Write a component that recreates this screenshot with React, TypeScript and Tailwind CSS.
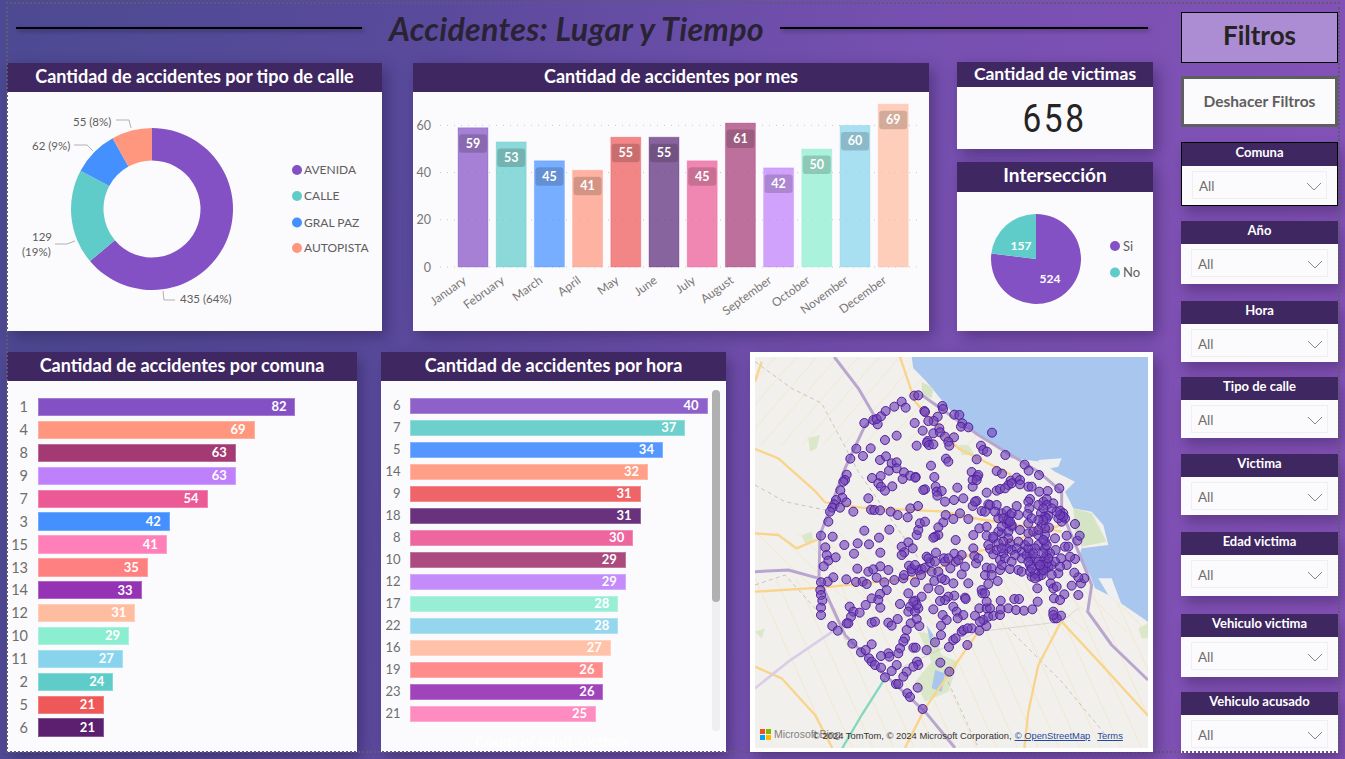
import React from "react";

const FONT = "[font-family:Lato,'Open_Sans',sans-serif]";

const PTS: number[] = [358,234,385,225,398,238,395,222,408,214,422,198,448,185,470,170,482,188,508,152,520,151,538,198,540,201,592,183,594,192,628,209,643,210,652,235,648,245,670,247,741,263,578,215,566,228,550,228,509,234,455,272,420,285,533,257,565,265,583,250,585,262,600,275,627,277,548,288,546,293,552,300,565,298,515,302,610,290,613,302,708,302,715,315,726,320,781,330,695,343,603,341,610,350,558,362,377,310,334,311,354,333,316,341,405,345,423,334,440,355,455,352,432,377,455,370,477,382,473,402,495,392,512,396,511,398,381,399,407,393,400,415,408,425,420,437,442,424,305,389,300,405,295,410,286,436,292,458,273,465,268,478,262,488,285,488,304,472,255,500,250,530,325,500,370,460,378,494,388,495,405,496,437,500,458,510,488,517,496,490,519,483,568,396,540,433,535,435,572,425,575,440,590,438,577,452,600,470,627,465,655,460,637,428,683,425,680,381,683,405,697,395,700,390,695,405,725,443,755,378,771,386,839,359,851,377,882,390,797,407,815,398,825,405,790,420,825,418,850,425,860,425,883,440,908,438,943,430,755,437,765,432,695,468,683,483,710,498,730,478,735,480,755,480,770,505,785,498,795,510,820,510,815,483,855,462,850,470,853,490,848,507,888,505,895,470,905,462,925,475,945,497,955,505,960,520,950,530,990,537,910,512,900,515,890,540,912,548,850,535,800,545,
228,572,263,575,241,607,298,600,338,595,372,598,402,578,433,554,358,557,245,630,250,647,272,637,236,664,327,626,406,623,337,671,370,680,385,673,406,664,430,675,265,697,248,710,228,712,226,735,228,750,232,767,228,788,228,810,262,843,278,857,322,896,304,703,333,711,353,710,365,717,395,698,418,712,448,705,425,735,405,747,380,760,400,765,362,780,314,785,325,800,344,803,318,815,305,835,310,835,380,833,390,830,406,788,430,833,440,842,458,822,465,777,490,745,475,700,477,690,492,662,500,680,510,712,520,675,530,672,540,668,555,652,545,635,550,640,573,623,597,640,600,650,628,626,650,630,632,650,616,670,650,688,660,665,670,715,685,610,688,632,693,655,725,668,735,612,745,628,470,605,490,592,478,622,503,610,470,630,515,570,520,555,525,535,540,530,580,570,570,575,565,578,595,532,580,547,602,510,625,522,645,505,670,522,703,550,725,545,632,585,685,570,725,572,745,580,
568,708,600,705,625,715,583,735,550,730,530,755,628,752,610,755,600,765,585,768,510,767,495,785,520,790,490,800,510,800,565,793,625,785,635,800,655,810,638,820,593,810,605,825,588,842,515,822,523,843,497,835,485,855,480,880,475,890,465,910,460,925,430,925,433,935,408,933,380,898,348,922,362,915,372,940,380,950,390,960,408,968,455,960,440,978,420,997,485,980,475,995,505,908,512,908,545,915,570,892,588,870,612,906,625,885,632,880,650,860,655,855,680,850,668,850,703,857,724,843,667,900,586,953,613,980,516,950,520,960,505,965,453,1017,460,1017,518,1028,487,1045,495,1056,533,1092,
660,758,662,762,690,812,715,825,705,830,730,815,745,812,765,810,703,790,725,790,735,790,767,793,790,790,767,767,725,770,808,762,822,762,813,795,837,797,862,793,878,770,710,735,712,745,720,745,730,717,758,708,
925,800,928,820,948,812,935,820,925,810,958,748,927,760,945,765,917,715,925,730,935,725,877,730,980,722,1000,750,1008,715,1018,700,1000,697,988,683,940,685,990,642,965,660,975,635,997,587,1004,572,965,572,930,580,960,605,970,605,932,615,948,640,
740,670,765,675,795,672,820,675,830,680,860,695,880,695,890,680,900,670,910,665,895,660,900,640,905,630,900,610,900,590,900,570,900,550,880,600,870,610,855,625,855,640,855,660,855,680,830,620,840,600,820,590,795,595,785,610,775,625,765,645,800,615,815,610,830,640,845,630,870,640,760,595,770,565,790,560,800,540,785,535,760,560,745,575,850,565,865,560,880,570,920,660,930,650,945,665,915,625,920,690,890,690,870,685,
780,640,810,630,880,650,885,665,905,655,895,675,885,660,910,640,895,625,790,580,775,590,850,610,865,625,905,600,895,585,940,520,955,515,945,510,760,520,775,520,790,525,795,530,905,520,895,525,730,600,755,615,720,690,740,690,770,660,800,650,860,670,870,700,850,650,
500,672,510,660,528,690,560,680,580,680,590,700,515,780,505,770,570,650,610,640,640,645,700,640,770,610,800,505,880,525,935,500,690,470,780,430,800,415,880,480,905,480,920,490,895,490,720,500,750,500,850,590,880,555,860,520,825,555,770,545];

const pts: [number, number][] = [];
for (let i = 0; i < PTS.length; i += 2) pts.push([PTS[i], PTS[i + 1]]);

function polar(cx: number, cy: number, r: number, deg: number) {
  const a = ((deg - 90) * Math.PI) / 180;
  return [cx + r * Math.cos(a), cy + r * Math.sin(a)];
}
function ring(cx: number, cy: number, R: number, r: number, a0: number, a1: number) {
  const [x0, y0] = polar(cx, cy, R, a0);
  const [x1, y1] = polar(cx, cy, R, a1);
  const large = a1 - a0 > 180 ? 1 : 0;
  if (r === 0) return `M${cx} ${cy}L${x0} ${y0}A${R} ${R} 0 ${large} 1 ${x1} ${y1}Z`;
  const [x2, y2] = polar(cx, cy, r, a1);
  const [x3, y3] = polar(cx, cy, r, a0);
  return `M${x0} ${y0}A${R} ${R} 0 ${large} 1 ${x1} ${y1}L${x2} ${y2}A${r} ${r} 0 ${large} 0 ${x3} ${y3}Z`;
}

function Panel({ title, cls, headCls, children }: { title: string; cls: string; headCls: string; children: React.ReactNode }) {
  return (
    <section className={`${cls} flex flex-col bg-[#fbfafd] shadow-[5px_6px_14px_rgba(30,15,60,0.38)]`}>
      <h2 className={`${headCls} shrink-0 flex items-center justify-center bg-[#3f2762] text-white font-bold`}>{title}</h2>
      <div className="relative flex-1 min-h-0">{children}</div>
    </section>
  );
}

const DONUT = [
  { v: 435, c: "#8351c4" },
  { v: 129, c: "#5fccc9" },
  { v: 62, c: "#4490ff" },
  { v: 55, c: "#ff977e" },
];

function Donut() {
  let acc = 0;
  const t = "#605e5c";
  return (
    <svg viewBox="0 0 375 239" className="block w-full h-full">
      {DONUT.map((d) => {
        const a0 = (acc / 681) * 360;
        acc += d.v;
        const a1 = (acc / 681) * 360;
        return <path key={d.c} d={ring(145, 117, 81, 48.5, a0, a1)} fill={d.c} />;
      })}
      <g fill="none" stroke="#b3b0ad" strokeWidth="1">
        <path d="M109 28H122L124 36" />
        <path d="M67 53H80L86 59" />
        <path d="M48 152H60L68 149" />
        <path d="M156 199L157 208H168" />
      </g>
      <g fill={t} fontSize="11.5" fontFamily="Lato, sans-serif">
        <text x="66" y="33.5">55 (8%)</text>
        <text x="25" y="57.5">62 (9%)</text>
        <text x="25" y="149">129</text>
        <text x="15" y="164">(19%)</text>
        <text x="173" y="211">435 (64%)</text>
      </g>
      {[["AVENIDA", "#8351c4", 78], ["CALLE", "#5fccc9", 104], ["GRAL PAZ", "#4490ff", 130.5], ["AUTOPISTA", "#ff977e", 156]].map(([n, c, y]) => (
        <g key={n as string}>
          <circle cx="290" cy={y as number} r="5" fill={c as string} />
          <text x="297" y={(y as number) + 4} fontSize="12" fill={t} fontFamily="Lato, sans-serif">{n}</text>
        </g>
      ))}
    </svg>
  );
}

const MONTHS = [
  ["January", 59, "#8351c4"], ["February", 53, "#5fccc9"], ["March", 45, "#4490ff"], ["April", 41, "#ff977e"],
  ["May", 55, "#ee5858"], ["June", 55, "#5c2a78"], ["July", 45, "#ec5a96"], ["August", 61, "#a33a74"],
  ["September", 42, "#bf80fb"], ["October", 50, "#8ceed0"], ["November", 60, "#88d4ec"], ["December", 69, "#ffbda0"],
] as const;

function Columns() {
  const base = 175;
  const k = 2.36;
  return (
    <svg viewBox="0 0 516 239" className="block w-full h-full">
      {[0, 20, 40, 60].map((g) => (
        <g key={g}>
          <line x1="27" x2="509" y1={base - g * k} y2={base - g * k} stroke="#c8c6c4" strokeDasharray="1 6" />
          <text x="18" y={base - g * k + 4.5} textAnchor="end" fontSize="12.5" fill="#777" fontFamily="Lato, sans-serif">{g}</text>
        </g>
      ))}
      {MONTHS.map(([m, v, c], i) => {
        const x = 45 + i * 38.2;
        const h = v * k;
        const y = base - h;
        const cx = x + 15;
        return (
          <g key={m}>
            <rect x={x} y={y} width="30" height={h} fill={c} opacity="0.72" />
            <rect x={x} y={y} width="30" height={h} fill="none" stroke={c} strokeOpacity="0.3" />
            <rect x={x + 1} y={y + 6.5} width="28" height="18.5" rx="3" fill="#000" opacity="0.17" />
            <text x={cx} y={y + 20} textAnchor="middle" fontSize="12.5" fontWeight="700" fill="#fff" fontFamily="Lato, sans-serif">{v}</text>
            <text transform={`translate(${cx - 6} 190) rotate(-36)`} textAnchor="end" fontSize="12" fill="#7a7876" fontFamily="Lato, sans-serif">{m}</text>
          </g>
        );
      })}
    </svg>
  );
}

function Pie() {
  const split = 360 - (157 / 681) * 360;
  return (
    <svg viewBox="0 0 196 139" className="block w-full h-full">
      <path d={ring(79, 67, 45, 0, 0, split)} fill="#8351c4" />
      <path d={ring(79, 67, 45, 0, split, 360)} fill="#5fccc9" />
      <g fill="#fff" fontSize="12" fontWeight="700" fontFamily="Lato, sans-serif" textAnchor="middle">
        <text x="64" y="58">157</text>
        <text x="93" y="91">524</text>
      </g>
      <circle cx="158" cy="54" r="5" fill="#8351c4" />
      <circle cx="158" cy="80.5" r="5" fill="#5fccc9" />
      <g fill="#605e5c" fontSize="13" fontFamily="Lato, sans-serif">
        <text x="166" y="58.5">Si</text>
        <text x="166" y="85">No</text>
      </g>
    </svg>
  );
}

const COMUNA = [
  ["1", 82, "bg-[#8351c4]"], ["4", 69, "bg-[#ff977e]"], ["8", 63, "bg-[#a33a74]"], ["9", 63, "bg-[#bf80fb]"],
  ["7", 54, "bg-[#ec5a96]"], ["3", 42, "bg-[#4490ff]"], ["15", 41, "bg-[#ff80b8]"], ["13", 35, "bg-[#ff8080]"],
  ["14", 33, "bg-[#9633b4]"], ["12", 31, "bg-[#ffbda0]"], ["10", 29, "bg-[#8ceed0]"], ["11", 27, "bg-[#88d4ec]"],
  ["2", 24, "bg-[#5fccc9]"], ["5", 21, "bg-[#ee5858]"], ["6", 21, "bg-[#5c1f70]"],
] as const;

const HORA = [
  ["6", 40, "bg-[#8e60c9]"], ["7", 37, "bg-[#6ed0cd]"], ["5", 34, "bg-[#5498ff]"], ["14", 32, "bg-[#ff9f88]"],
  ["9", 31, "bg-[#ef6468]"], ["18", 31, "bg-[#6a327c]"], ["8", 30, "bg-[#ee669e]"], ["10", 29, "bg-[#aa4a7e]"],
  ["12", 29, "bg-[#c48cfb]"], ["17", 28, "bg-[#97eed4]"], ["22", 28, "bg-[#93d6ee]"], ["16", 27, "bg-[#ffc2a8]"],
  ["19", 26, "bg-[#ff8c8c]"], ["23", 26, "bg-[#9f44bb]"], ["21", 25, "bg-[#ff8cc0]"],
] as const;

function Bars({ rows, unit, big }: { rows: readonly (readonly [string, number, string])[]; unit: number; big: boolean }) {
  return (
    <div className={big ? "flex flex-col gap-[4.6px] pt-[17px]" : "flex flex-col gap-[5.7px] pt-[17px]"}>
      {rows.map(([l, v, c]) => (
        <div key={l} className={big ? "flex items-center h-[18.3px]" : "flex items-center h-[16.3px]"}>
          <span className={big ? "w-[21px] text-right text-[14.5px] text-[#6f6d6b]" : "w-[19.5px] text-right text-[13px] text-[#6f6d6b]"}>{l}</span>
          <div
            className={`${c} ${big ? "ml-[10px]" : "ml-[9.5px]"} h-full flex items-center justify-end pr-[8px] border border-white/25 text-white text-[13px] font-bold`}
            style={{ width: v * unit }}
          >
            {v}
          </div>
        </div>
      ))}
    </div>
  );
}

function MapArt() {
  const gridA: string[] = [];
  for (let i = 0; i < 22; i++) {
    const o = i * 62;
    gridA.push(`M${30 + o} 36L${-200 + o} 300`);
    gridA.push(`M${30 + o} 700L${260 + o} 1209`);
    gridA.push(`M${30 + o} 560L${340 + o} 860`);
  }
  return (
    <svg viewBox="30 36 1179 1173" className="block w-full h-full" preserveAspectRatio="none">
      <rect x="30" y="36" width="1179" height="1173" fill="#f2f0ec" />
      <g fill="none" stroke="#f2e4c6" strokeWidth="2.5" opacity="0.85">
        {gridA.map((d, i) => <path key={i} d={d} />)}
      </g>
      <path d="M500 36H1209V830L1150 790L1090 750L1050 730L1035 690L1000 640L1010 610L1090 600L1075 540L1040 500L985 490L960 440L990 410L930 380L890 350L800 340L700 270L610 190L545 110L505 70Z" fill="#a9c6ee" />
      <path d="M985 490L1040 505L1085 590L1010 605L990 560Z" fill="#d6e4c6" />
      <path d="M530 110L565 130L560 160L530 150Z" fill="#d6e4c6" />
      <path d="M880 345L950 340L940 365L890 375Z" fill="#eef0f2" />
      <path d="M1060 700L1100 700L1130 780L1090 750Z" fill="#eef0f2" />
      <path d="M190 280L225 270L215 310L195 320Z M170 570L200 560L205 590L180 595Z M520 860L570 870L590 930L640 950L610 1040L540 1070L510 1010L560 950Z M640 300L670 300L690 330L650 330Z M1180 850L1209 835V880L1190 880Z M30 860L60 850L50 880Z" fill="#dbe7c9" />
      <path d="M545 840L565 870L555 890Z M570 975L600 985L590 1040L560 1030Z" fill="#a9c6ee" />
      <g fill="none" stroke="#9a948c" strokeWidth="2" strokeDasharray="12 10" opacity="0.7">
        <path d="M30 50L140 130L230 175L340 380L520 640" />
        <path d="M30 420L120 470L240 495" />
        <path d="M30 720L120 690L220 800L420 1000" />
        <path d="M790 850L950 1010L1090 1180" />
        <path d="M600 990L700 1209" />
      </g>
      <g fill="none" stroke="#f9d48a" strokeWidth="7" strokeLinejoin="round">
        <path d="M30 312L100 340L208 436L240 472L350 488L600 500L700 522L950 560" />
        <path d="M30 565L100 570L155 610L225 580" />
        <path d="M30 740L230 728L500 700L700 620L950 540" />
        <path d="M30 965L110 1000L210 1110L262 1209" />
        <path d="M465 36L510 170L640 310L800 390" />
        <path d="M948 830L880 960L850 1100L838 1209" />
        <path d="M950 830L1080 970L1209 1112" />
        <path d="M700 860L540 1090L480 1209" />
        <path d="M30 110L50 50" />
      </g>
      <path d="M420 1000L350 1110L292 1209" fill="none" stroke="#82d8be" strokeWidth="7" />
      <g fill="none" stroke="#b9a6cf" strokeWidth="9" strokeLinejoin="round">
        <path d="M268 36L340 130L388 212L356 250L300 370L225 570L222 700L300 870L420 990L540 1100L630 1209" />
        <path d="M530 150L700 270L880 380L950 440L950 500L1000 620L1040 720L1028 800L1100 900L1209 1005" />
        <path d="M30 680L130 675L222 700" />
      </g>
      <path d="M30 1030L130 950L262 860" fill="none" stroke="#dacde8" strokeWidth="8" />
      <path d="M420 990L700 860L950 830L1000 790" fill="none" stroke="#bdbdb5" strokeWidth="3" opacity="0.5" />
      <g fill="#6f42b4" fillOpacity="0.62" stroke="#4f1fa0" strokeWidth="3">
        {pts.map(([x, y], i) => <circle key={i} cx={x} cy={y} r="13.5" />)}
      </g>
    </svg>
  );
}

const SLICERS = [
  { t: "Comuna", box: "mt-[15px] h-[64px] border border-black" },
  { t: "Año", box: "mt-[15px] h-[63px]" },
  { t: "Hora", box: "mt-[17px] h-[61px]" },
  { t: "Tipo de calle", box: "mt-[15px] h-[61px]" },
  { t: "Victima", box: "mt-[16px] h-[61px]" },
  { t: "Edad victima", box: "mt-[17px] h-[64px]" },
  { t: "Vehiculo victima", box: "mt-[18px] h-[63px]" },
  { t: "Vehiculo acusado", box: "mt-[15px] h-[61px]" },
];

function Slicer({ t, box }: { t: string; box: string }) {
  return (
    <div className={`${box} flex flex-col bg-[#fbfafd] shadow-[4px_8px_12px_rgba(30,15,60,0.32)]`}>
      <div className="h-[23px] shrink-0 flex items-center justify-center pb-[4px] bg-[#3f2762] text-white text-[13px] font-bold">{t}</div>
      <div className="flex-1 px-[10px] pt-[5px]">
        <div className="h-[28px] flex items-center justify-between pl-[6px] pr-[4px] pt-[2px] border border-[#f0eef2] text-[13.5px] text-[#6f6d6b]">
          <span>All</span>
          <svg width="16" height="9" viewBox="0 0 16 9" fill="none" stroke="#7d8a90" strokeWidth="1"><path d="M1 1L8 8L15 1" /></svg>
        </div>
      </div>
    </div>
  );
}

export default function App() {
  return (
    <div className={`${FONT} relative w-[1345px] h-[759px] overflow-hidden flex pl-[7px] bg-[linear-gradient(100deg,#4c4a92_0%,#5a4a9c_30%,#7650b0_62%,#8652b8_100%)]`}>
      <div className="absolute left-[6px] top-[2px] w-[1334px] h-[751px] border-2 border-dotted border-[#5e5a74] pointer-events-none" />
      <main className="w-[1146px] flex flex-col">
        <header className="h-[63px] shrink-0 flex items-center pl-[9px] pb-[7px]">
          <div className="w-[346px] h-[2px] bg-black shadow-[2px_2px_4px_rgba(0,0,0,0.4)]" />
          <h1 className="w-[418px] text-center text-[32.2px] tracking-[0.3px] italic font-bold text-[#2a2335] pt-[2px] pl-[11px]">Accidentes: Lugar y Tiempo</h1>
          <div className="w-[368px] h-[2px] bg-black shadow-[2px_2px_4px_rgba(0,0,0,0.4)]" />
        </header>
        <div className="h-[268px] shrink-0 flex">
          <Panel title="Cantidad de accidentes por tipo de calle" cls="w-[375px] h-full" headCls="h-[29px] text-[18px] pb-[2px]">
            <Donut />
          </Panel>
          <Panel title="Cantidad de accidentes por mes" cls="w-[516px] h-full ml-[31px]" headCls="h-[29px] text-[18px] pb-[2px]">
            <Columns />
          </Panel>
          <div className="w-[196px] ml-[28px] flex flex-col -mt-px">
            <Panel title="Cantidad de victimas" cls="h-[87px]" headCls="h-[25px] text-[17.5px]">
              <div className="h-full flex items-center justify-center pt-[2px] text-[#252423] [font-family:Roboto,sans-serif]">
                <span className="inline-block text-[38px] tracking-[3px] scale-x-[0.88]">658</span>
              </div>
            </Panel>
            <Panel title="Intersección" cls="h-[169px] mt-[13px]" headCls="h-[30px] text-[19px] pb-[3px]">
              <Pie />
            </Panel>
          </div>
        </div>
        <div className="h-[400px] shrink-0 flex mt-[21px]">
          <Panel title="Cantidad de accidentes por comuna" cls="w-[350px] h-full" headCls="h-[29px] text-[18px] pb-[2px]">
            <Bars rows={COMUNA} unit={3.14} big />
          </Panel>
          <Panel title="Cantidad de accidentes por hora" cls="w-[345px] h-full ml-[24px]" headCls="h-[29px] text-[18px] pb-[2px]">
            <Bars rows={HORA} unit={7.44} big={false} />
            <div className="absolute left-[331px] top-[9px] w-[8px] h-[341px] rounded-full bg-[#efeff1]">
              <div className="h-[212px] rounded-full bg-[#b0b0b0]" />
            </div>
            <div className="absolute left-0 right-0 top-[349px] pr-[4px] text-center text-[15.5px] text-white">Count of edad_victima</div>
          </Panel>
          <section className="relative w-[403px] h-full ml-[24px] bg-white p-[5px] pb-[4px] shadow-[5px_6px_14px_rgba(30,15,60,0.38)]">
            <MapArt />
            <div className="absolute left-[10px] top-[375px] flex items-center gap-[3px] text-[10.5px] text-[#7f7f7f] [font-family:'Liberation_Sans',sans-serif]">
              <span className="grid grid-cols-2 gap-px w-[11px] h-[11px]">
                <i className="bg-[#f25022]" /><i className="bg-[#7fba00]" /><i className="bg-[#00a4ef]" /><i className="bg-[#ffb900]" />
              </span>
              Microsoft Bing
            </div>
            <div className="absolute left-[63px] top-[378px] flex text-[9.4px] leading-[12px] text-[#333] whitespace-nowrap [font-family:'Liberation_Sans',sans-serif]">
              <span>© 2024 TomTom, © 2024 Microsoft Corporation,</span>
              <span className="ml-[3px] underline text-[#1f4aa0]">© OpenStreetMap</span>
              <span className="ml-[7px] underline text-[#1f4aa0]">Terms</span>
            </div>
          </section>
        </div>
      </main>
      <aside className="w-[157px] ml-[28px] pt-[12px] flex flex-col">
        <div className="h-[51px] shrink-0 flex items-center justify-center pb-[4px] bg-[#ac8dd3] border border-black text-[26px] font-bold text-[#252423]">Filtros</div>
        <div className="h-[51px] shrink-0 mt-[13px] flex items-center justify-center bg-[#fbfafd] border-[3px] border-[#5f5f5f] text-[15.5px] font-bold text-[#605e5c]">Deshacer Filtros</div>
        {SLICERS.map((s) => <Slicer key={s.t} {...s} />)}
      </aside>
    </div>
  );
}
